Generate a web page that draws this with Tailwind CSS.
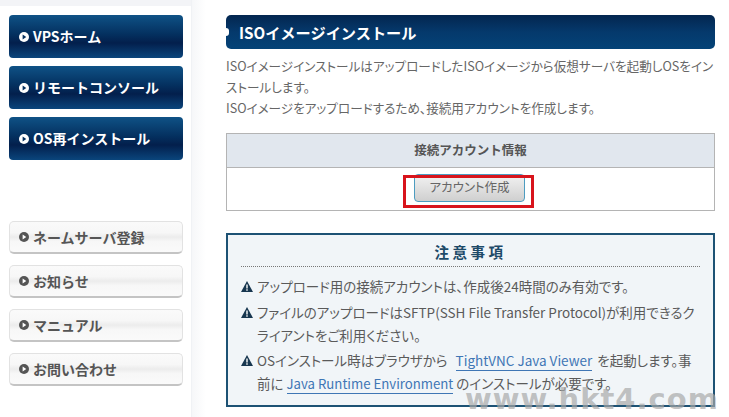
<!DOCTYPE html>
<html lang="ja">
<head>
<meta charset="UTF-8">
<script src="https://cdn.jsdelivr.net/npm/@tailwindcss/browser@4"></script>
<title>ISOイメージインストール</title>
</head>
<body class="bg-white">
<div class="relative flex w-[729px] h-[417px] overflow-hidden bg-white font-['Noto_Sans_CJK_JP','Noto_Sans',sans-serif] text-[#555]">

  <!-- side menu -->
  <div class="w-[226px] h-full flex shrink-0">
    <div class="w-[192px] h-full border-r border-[#f0f2f5]">
      <div class="h-[6px] bg-[#f3f4f7]"></div>
      <div class="pl-[9px] pt-[9px] flex flex-col gap-[8px]">
        <a class="w-[174px] h-[43px] rounded-[4px] flex items-center pl-[10px] gap-[4px] text-white font-bold text-[14px] bg-[linear-gradient(#0f5286,#04305f_45%,#031f4c_65%,#0a457c)]">
          <svg width="10" height="10" viewBox="0 0 11 11"><circle cx="5.5" cy="5.5" r="5.5" fill="#fff"/><path d="M4 2.8 8 5.5 4 8.2z" fill="#05305f"/></svg>
          <span>VPSホーム</span>
        </a>
        <a class="w-[174px] h-[43px] rounded-[4px] flex items-center pl-[10px] gap-[4px] text-white font-bold text-[14px] bg-[linear-gradient(#0f5286,#04305f_45%,#031f4c_65%,#0a457c)]">
          <svg width="10" height="10" viewBox="0 0 11 11"><circle cx="5.5" cy="5.5" r="5.5" fill="#fff"/><path d="M4 2.8 8 5.5 4 8.2z" fill="#05305f"/></svg>
          <span>リモートコンソール</span>
        </a>
        <a class="w-[174px] h-[43px] rounded-[4px] flex items-center pl-[10px] gap-[4px] text-white font-bold text-[14px] bg-[linear-gradient(#0f5286,#04305f_45%,#031f4c_65%,#0a457c)]">
          <svg width="10" height="10" viewBox="0 0 11 11"><circle cx="5.5" cy="5.5" r="5.5" fill="#fff"/><path d="M4 2.8 8 5.5 4 8.2z" fill="#05305f"/></svg>
          <span>OS再インストール</span>
        </a>
      </div>
      <div class="pl-[9px] pt-[61px] flex flex-col gap-[11px]">
        <a class="w-[174px] h-[33px] rounded-[5px] border border-[#e2e2e2] border-b-2 border-b-[#c4c4c4] flex items-center pl-[9px] gap-[4px] text-[#555] font-bold text-[14px] bg-[linear-gradient(#fafafa,#f7f7f7_35%,#ececec_50%,#f7f7f7_65%,#fafafa)]">
          <svg width="10" height="10" viewBox="0 0 11 11"><circle cx="5.5" cy="5.5" r="5.5" fill="#555"/><path d="M4 2.8 8 5.5 4 8.2z" fill="#fff"/></svg>
          <span>ネームサーバ登録</span>
        </a>
        <a class="w-[174px] h-[33px] rounded-[5px] border border-[#e2e2e2] border-b-2 border-b-[#c4c4c4] flex items-center pl-[9px] gap-[4px] text-[#555] font-bold text-[14px] bg-[linear-gradient(#fafafa,#f7f7f7_35%,#ececec_50%,#f7f7f7_65%,#fafafa)]">
          <svg width="10" height="10" viewBox="0 0 11 11"><circle cx="5.5" cy="5.5" r="5.5" fill="#555"/><path d="M4 2.8 8 5.5 4 8.2z" fill="#fff"/></svg>
          <span>お知らせ</span>
        </a>
        <a class="w-[174px] h-[33px] rounded-[5px] border border-[#e2e2e2] border-b-2 border-b-[#c4c4c4] flex items-center pl-[9px] gap-[4px] text-[#555] font-bold text-[14px] bg-[linear-gradient(#fafafa,#f7f7f7_35%,#ececec_50%,#f7f7f7_65%,#fafafa)]">
          <svg width="10" height="10" viewBox="0 0 11 11"><circle cx="5.5" cy="5.5" r="5.5" fill="#555"/><path d="M4 2.8 8 5.5 4 8.2z" fill="#fff"/></svg>
          <span>マニュアル</span>
        </a>
        <a class="w-[174px] h-[33px] rounded-[5px] border border-[#e2e2e2] border-b-2 border-b-[#c4c4c4] flex items-center pl-[9px] gap-[4px] text-[#555] font-bold text-[14px] bg-[linear-gradient(#fafafa,#f7f7f7_35%,#ececec_50%,#f7f7f7_65%,#fafafa)]">
          <svg width="10" height="10" viewBox="0 0 11 11"><circle cx="5.5" cy="5.5" r="5.5" fill="#555"/><path d="M4 2.8 8 5.5 4 8.2z" fill="#fff"/></svg>
          <span>お問い合わせ</span>
        </a>
      </div>
    </div>
    <div class="w-[14px] h-full bg-[linear-gradient(90deg,#f6f7f9,#ffffff)]"></div>
  </div>

  <!-- main -->
  <div class="w-[489px] pt-[15px] shrink-0">
    <h1 class="relative h-[34px] rounded-[5px] pl-[13px] flex items-center text-white font-bold text-[15.2px] bg-[linear-gradient(#03264f,#05396c_50%,#044377)]">
      ISOイメージインストール
      <span class="absolute left-[-3px] top-[13px] w-[6px] h-[8px] rounded-full bg-white"></span>
    </h1>
    <p class="mt-[6px] text-[12.6px] leading-[21px] text-[#666] whitespace-nowrap [font-feature-settings:'palt']">ISOイメージインストールはアップロードしたISOイメージから仮想サーバを起動しOSをイン<br>ストールします。<br>ISOイメージをアップロードするため、接続用アカウントを作成します。</p>

    <div class="mt-[15px] border border-[#b4b4b4] h-[78px]">
      <div class="h-[34px] bg-[#e1e7ee] border-b border-[#b4b4b4] flex items-center justify-center font-bold text-[12.5px] text-[#555]">接続アカウント情報</div>
      <div class="relative flex justify-center pt-[6px]">
        <button class="w-[111px] h-[28px] ml-[-2px] pb-[2px] rounded-[4px] border border-[#4d9cc0] bg-[linear-gradient(#f2f2f2,#cfcfcf)] text-[12.5px] text-[#666] [font-feature-settings:'palt']">アカウント作成</button>
        <span class="absolute left-[176px] top-[7px] w-[131px] h-[33px] border-[3px] border-[#d8141c]"></span>
      </div>
    </div>

    <div class="mt-[22px] h-[174px] border-2 border-[#1d5274] bg-[#f1f5f8] px-[13px]">
      <div class="h-[32px] border-b border-dotted border-[#777] flex items-center justify-center pt-[2px] font-bold text-[14.5px] tracking-[3.5px] text-[#1d4a68]">注意事項</div>
      <ul class="pt-[8px] text-[13.5px] leading-[23.5px] text-[#5a5a5a] whitespace-nowrap [font-feature-settings:'palt']">
        <li class="flex gap-[4px]">
          <svg class="mt-[6px] shrink-0" width="12" height="11" viewBox="0 0 12 11"><path d="M6 0 12 11H0z" fill="#17364f"/><path d="M5.3 3.5h1.4v4H5.3zM5.3 8.3h1.4v1.4H5.3z" fill="#fff"/></svg>
          <span>アップロード用の接続アカウントは、作成後24時間のみ有効です。</span>
        </li>
        <li class="flex gap-[4px] mt-[2px]">
          <svg class="mt-[6px] shrink-0" width="12" height="11" viewBox="0 0 12 11"><path d="M6 0 12 11H0z" fill="#17364f"/><path d="M5.3 3.5h1.4v4H5.3zM5.3 8.3h1.4v1.4H5.3z" fill="#fff"/></svg>
          <span>ファイルのアップロードはSFTP(SSH File Transfer Protocol)が利用できるク<br>ライアントをご利用ください。</span>
        </li>
        <li class="flex gap-[4px] mt-[1px]">
          <svg class="mt-[6px] shrink-0" width="12" height="11" viewBox="0 0 12 11"><path d="M6 0 12 11H0z" fill="#17364f"/><path d="M5.3 3.5h1.4v4H5.3zM5.3 8.3h1.4v1.4H5.3z" fill="#fff"/></svg>
          <span>OSインストール時はブラウザから <a class="ml-[5px] mr-[2px] text-[#3f76b5] border-b border-[#3f76b5]">TightVNC Java Viewer</a> を起動します。事<br>前に <a class="text-[13.2px] text-[#3f76b5] border-b border-[#3f76b5]">Java Runtime Environment</a> のインストールが必要です。</span>
        </li>
      </ul>
    </div>
  </div>

  <!-- watermark over the notice box -->
  <div class="absolute left-[465px] top-[383px] font-['DejaVu_Sans',sans-serif] font-bold text-[29px] leading-[32px] text-[#a8a8a8]/70 tracking-[1px] whitespace-nowrap">www.hkt4.com</div>
</div>
</body>
</html>
